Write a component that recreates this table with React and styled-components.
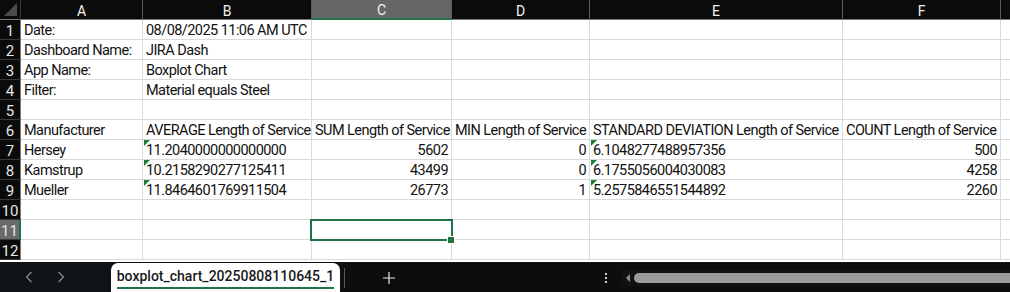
import React from 'react'
import styled, { createGlobalStyle } from 'styled-components';

const GlobalStyle = createGlobalStyle`
  html, body {
    margin: 0;
    padding: 0;
    background: #ffffff;
    overflow: hidden;
  }
  body {
    font-family: Roboto, "Liberation Sans", sans-serif;
  }
`;

const COLS = [
  { key: 'A', width: 122 },
  { key: 'B', width: 169 },
  { key: 'C', width: 140 },
  { key: 'D', width: 138 },
  { key: 'E', width: 253 },
  { key: 'F', width: 158 },
  { key: 'G', width: 40 },
];

const Window = styled.div`
  width: 1010px;
  height: 292px;
  display: flex;
  flex-direction: column;
  overflow: hidden;
  background: #fff;
`;

const Sheet = styled.div`
  height: 262px;
  overflow: hidden;
  display: grid;
  grid-template-columns: 21px ${COLS.map(c => c.width + 'px').join(' ')};
  grid-auto-rows: 20px;
`;

const Corner = styled.div`
  background: #0b0b0b;
  border-right: 1px solid #3a3a3a;
  border-bottom: 1px solid #7a7a7a;
  position: relative;
  &::after {
    content: '';
    position: absolute;
    right: 3px;
    bottom: 3px;
    width: 0;
    height: 0;
    border-left: 13px solid transparent;
    border-bottom: 13px solid #4a4a4a;
  }
`;

const ColHead = styled.div`
  background: ${p => (p.$active ? '#666666' : '#0b0b0b')};
  color: #f2f2f2;
  font-size: 14px;
  display: flex;
  align-items: center;
  justify-content: center;
  padding-top: 2px;
  border-right: 1px solid #5a5a5a;
  border-bottom: ${p => (p.$active ? '2px solid #217346' : '1px solid #7a7a7a')};
  box-sizing: border-box;
`;

const RowHead = styled.div`
  background: ${p => (p.$active ? '#6a6a6a' : '#0b0b0b')};
  color: #e6e6e6;
  font-size: 15px;
  line-height: 16px;
  display: flex;
  align-items: flex-end;
  justify-content: center;
  border-right: ${p => (p.$active ? '2px solid #217346' : '1px solid #7a7a7a')};
  border-bottom: 1px solid #3a3a3a;
  box-sizing: border-box;
`;

const Cell = styled.div`
  position: relative;
  border-right: 1px solid #dadada;
  border-bottom: 1px solid #dadada;
  box-sizing: border-box;
  font-size: 14.5px;
  letter-spacing: -0.55px;
  color: #111;
  white-space: nowrap;
  display: flex;
  align-items: flex-end;
  justify-content: ${p => (p.$num ? 'flex-end' : 'flex-start')};
  padding: 0 3px;
  line-height: 16px;

  ${p => p.$flag && `
    &::before {
      content: '';
      position: absolute;
      left: 1px;
      top: 0;
      border-top: 6px solid #1a7f37;
      border-right: 6px solid transparent;
    }
  `}

  ${p => p.$selected && `
    &::after {
      content: '';
      position: absolute;
      left: -2px;
      top: -1px;
      right: -2px;
      bottom: -2px;
      border: 2px solid #217346;
      z-index: 2;
    }
  `}
`;

const Handle = styled.span`
  position: absolute;
  right: -4px;
  bottom: -5px;
  width: 6px;
  height: 6px;
  background: #217346;
  border: 1px solid #fff;
  z-index: 3;
`;

const BottomBar = styled.div`
  flex: 1;
  background: #0f1316;
  display: flex;
  align-items: stretch;
  position: relative;
`;

const NavBtn = styled.div`
  width: 32px;
  display: flex;
  align-items: center;
  justify-content: center;
  svg { display: block; }
`;

const Nav = styled.div`
  display: flex;
  padding-left: 13px;
  width: 98px;
`;

const Tab = styled.div`
  margin-top: 1px;
  width: 229px;
  background: #ffffff;
  border-radius: 7px 7px 0 0;
  display: flex;
  align-items: center;
  justify-content: center;
`;

const TabLabel = styled.span`
  font-size: 14px;
  font-weight: 500;
  color: #1a1a1a;
  padding-bottom: 2px;
  border-bottom: 2px solid #217346;
  line-height: 17px;
  margin-top: 2px;
`;

const Rest = styled.div`
  flex: 1;
  margin-top: 1px;
  background: #0b0d0e;
  border-radius: 7px 0 0 0;
  display: flex;
  align-items: center;
`;

const Sep = styled.div`
  width: 1px;
  height: 20px;
  background: #5a5a5a;
  margin-left: 4px;
`;

const AddBtn = styled.div`
  margin-left: 38px;
  display: flex;
  align-items: center;
`;

const More = styled.div`
  margin-left: 210px;
  display: flex;
  flex-direction: column;
  gap: 2px;
  span {
    width: 2px;
    height: 2px;
    background: #d0d0d0;
  }
`;

const Scroll = styled.div`
  margin-left: 14px;
  flex: 1;
  height: 16px;
  background: #121212;
  display: flex;
  align-items: center;
  padding-left: 4px;
  gap: 3px;
`;

const Thumb = styled.div`
  flex: 1;
  height: 10px;
  background: #9b9b9b;
  border-radius: 5px 0 0 5px;
`;

const rows = [
  ['Date:', '08/08/2025 11:06 AM UTC'],
  ['Dashboard Name:', 'JIRA Dash'],
  ['App Name:', 'Boxplot Chart'],
  ['Filter:', 'Material equals Steel'],
  [],
  ['Manufacturer', 'AVERAGE Length of Service', 'SUM Length of Service', 'MIN Length of Service', 'STANDARD DEVIATION Length of Service', 'COUNT Length of Service'],
  ['Hersey', '11.2040000000000000', 5602, 0, '6.1048277488957356', 500],
  ['Kamstrup', '10.2158290277125411', 43499, 0, '6.1755056004030083', 4258],
  ['Mueller', '11.8464601769911504', 26773, 1, '5.2575846551544892', 2260],
  [],
  [],
  [],
];

export default function App() {
  return (
    <Window>
      <GlobalStyle />
      <Sheet>
        <Corner />
        {COLS.map(c => (
          <ColHead key={c.key} $active={c.key === 'C'}>{c.key === 'G' ? '' : c.key}</ColHead>
        ))}
        {rows.map((r, ri) => (
          <React.Fragment key={ri}>
            <RowHead $active={ri === 10}>{ri + 1}</RowHead>
            {COLS.map((c, ci) => {
              const v = r[ci];
              const num = typeof v === 'number';
              const flag = ri >= 6 && ri <= 8 && (ci === 1 || ci === 4);
              const selected = ri === 10 && ci === 2;
              return (
                <Cell key={c.key} $num={num} $flag={flag} $selected={selected}>
                  {v}
                  {selected && <Handle />}
                </Cell>
              );
            })}
          </React.Fragment>
        ))}
      </Sheet>
      <BottomBar>
        <Nav>
          <NavBtn>
            <svg width="8" height="12" viewBox="0 0 8 12"><path d="M6.5 1 L1.5 6 L6.5 11" fill="none" stroke="#8a8a8a" strokeWidth="1.3" /></svg>
          </NavBtn>
          <NavBtn>
            <svg width="8" height="12" viewBox="0 0 8 12"><path d="M1.5 1 L6.5 6 L1.5 11" fill="none" stroke="#8a8a8a" strokeWidth="1.3" /></svg>
          </NavBtn>
        </Nav>
        <Tab>
          <TabLabel>boxplot_chart_20250808110645_1</TabLabel>
        </Tab>
        <Rest>
          <Sep />
          <AddBtn>
            <svg width="12" height="12" viewBox="0 0 12 12"><path d="M6 0 V12 M0 6 H12" stroke="#e8e8e8" strokeWidth="1.2" /></svg>
          </AddBtn>
          <More><span /><span /><span /></More>
          <Scroll>
            <svg width="6" height="10" viewBox="0 0 6 10"><path d="M5 1 L1 5 L5 9 Z" fill="#8a8a8a" /></svg>
            <Thumb />
          </Scroll>
        </Rest>
      </BottomBar>
    </Window>
  );
}
